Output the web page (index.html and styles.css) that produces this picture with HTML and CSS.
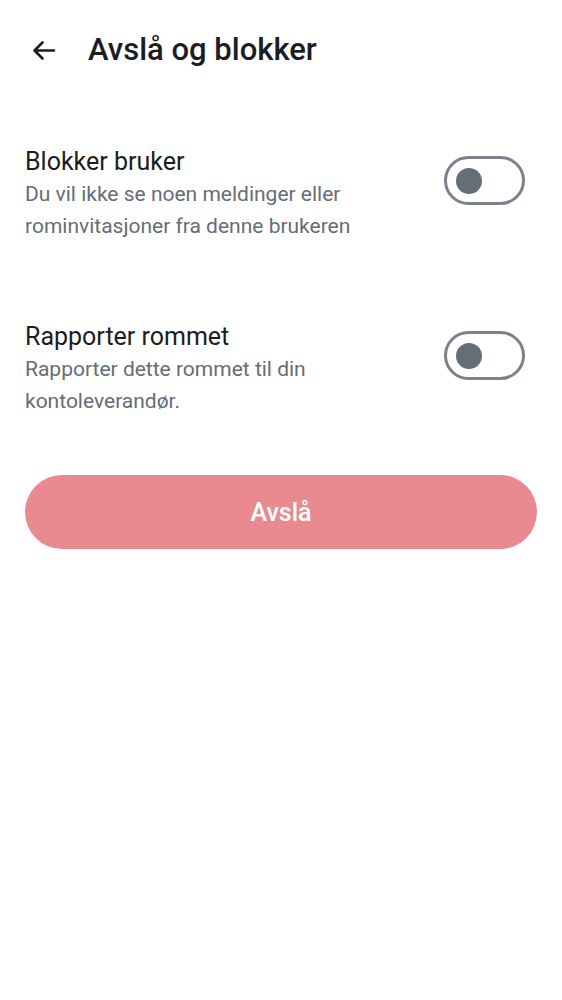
FILE: index.html
```html
<!DOCTYPE html>
<html lang="no">
<head>
<meta charset="utf-8">
<link rel="stylesheet" href="styles.css">
</head>
<body>
<header class="topbar">
  <svg class="back" width="28" height="28" viewBox="0 0 28 28" aria-hidden="true">
    <path d="M25 14.5H6.5M13.5 6.5L5.5 14.5L13.5 22.5" fill="none" stroke="#1b1d22" stroke-width="2.6" stroke-linecap="round" stroke-linejoin="round"/>
  </svg>
  <h1 class="title">Avslå og blokker</h1>
</header>
<main class="content">
  <div class="row">
    <div class="texts">
      <div class="row-title">Blokker bruker</div>
      <div class="row-sub">Du vil ikke se noen meldinger eller rominvitasjoner fra denne brukeren</div>
    </div>
    <div class="toggle"><span class="knob"></span></div>
  </div>
  <div class="row">
    <div class="texts">
      <div class="row-title">Rapporter rommet</div>
      <div class="row-sub">Rapporter dette rommet til din kontoleverandør.</div>
    </div>
    <div class="toggle"><span class="knob"></span></div>
  </div>
  <button class="decline">Avslå</button>
</main>
</body>
</html>
```

FILE: styles.css
```css
* { box-sizing: border-box; }
html, body { margin: 0; padding: 0; background: #ffffff; }
body { font-family: Roboto, "Noto Sans", sans-serif; color: #1b1d22; width: 562px; }

.topbar {
  height: 100px;
  display: flex;
  align-items: center;
  padding-left: 29px;
}
.back { display: block; margin-right: 31px; }
.title {
  margin: 0;
  font-size: 31px;
  font-weight: 500;
  line-height: 40px;
  color: #1b1d22;
}

.content { padding: 46px 25px 0 25px; }

.row {
  display: flex;
  align-items: flex-start;
  justify-content: space-between;
  gap: 20px;
  margin-bottom: 79px;
}
.row + .row { margin-bottom: 58px; }
.texts { width: 370px; }
.row-title {
  font-size: 25px;
  line-height: 32px;
  color: #1b1d22;
}
.row-sub {
  font-size: 21px;
  line-height: 32px;
  color: #656d77;
}

.toggle {
  width: 81px;
  height: 49px;
  margin-top: 10px;
  border: 3px solid #7b828c;
  border-radius: 25px;
  display: flex;
  align-items: center;
  padding-left: 9px;
  margin-right: 12px;
  flex-shrink: 0;
}
.knob {
  width: 26px;
  height: 26px;
  border-radius: 50%;
  background: #656d77;
}

.decline {
  display: block;
  width: 100%;
  height: 74px;
  border: none;
  border-radius: 37px;
  background: #e98a91;
  color: #ffffff;
  font-family: Roboto, "Noto Sans", sans-serif;
  font-size: 25px;
  font-weight: 500;
}
```
